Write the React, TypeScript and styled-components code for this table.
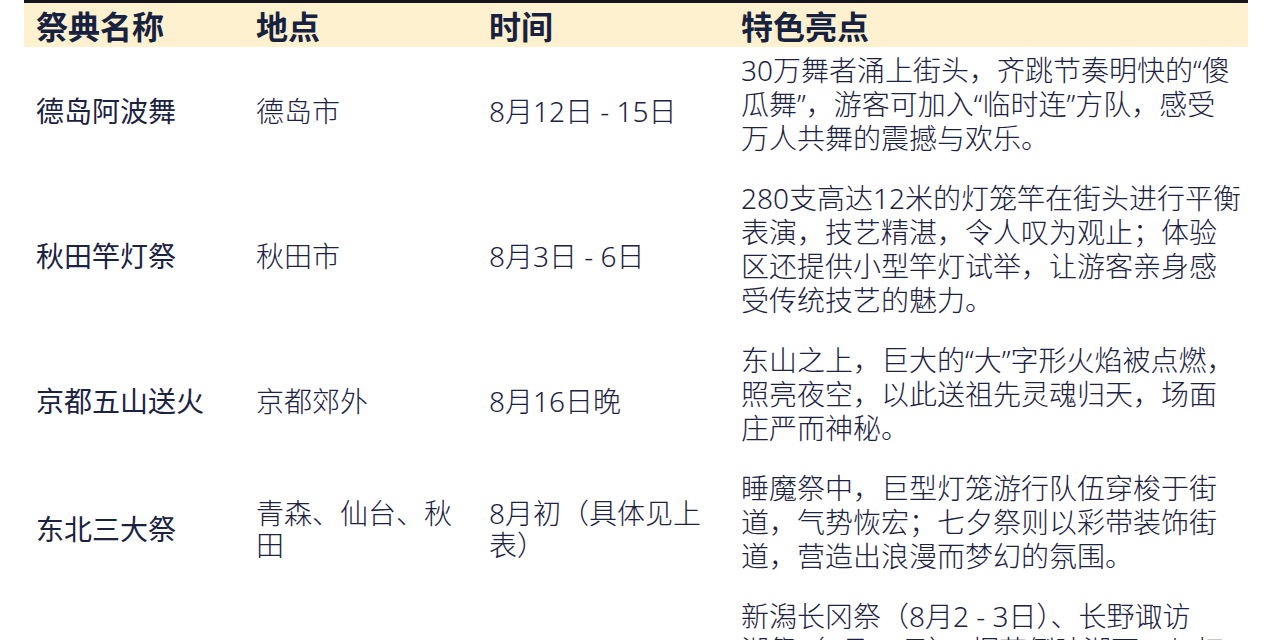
import React from "react";
import styled, {createGlobalStyle} from "styled-components";

const GlobalStyle = createGlobalStyle`
  html, body {
    margin: 0;
    padding: 0;
    background: #ffffff;
  }
  body {
    font-family: "Noto Sans", "Noto Sans CJK SC", sans-serif;
    color: #1d2444;
  }
`;

const Page = styled.div`
  width: 1280px;
  height: 640px;
  overflow: hidden;
  padding: 0 32px 0 24px;
  box-sizing: border-box;
`;

const Table = styled.table`
  width: 1224px;
  border-collapse: collapse;
  table-layout: fixed;
  border-top: 3px solid #14161c;
`;

const HeadRow = styled.tr`
  background: #fdf1cf;
`;

const HeadCell = styled.th<{$width: number}>`
  box-sizing: border-box;
  width: ${p => p.$width}px;
  height: 44px;
  padding: 4px 12px 0;
  text-align: left;
  vertical-align: middle;
  font-size: 32px;
  font-weight: 700;
  line-height: 40px;
  color: #16223f;
`;

const Cell = styled.td<{$name?: boolean}>`
  box-sizing: border-box;
  padding: 0 12px;
  vertical-align: middle;
  font-size: 28px;
  line-height: 32px;
  font-weight: ${p => (p.$name ? 400 : 300)};
  color: #1b2242;
`;

const DescCell = styled.td`
  box-sizing: border-box;
  padding: 6px 4px 20px 12px;
  vertical-align: top;
  font-size: 28px;
  line-height: 34px;
  font-weight: 300;
  color: #1b2242;
`;

const Line = styled.span`
  display: block;
  white-space: nowrap;
`;

interface Festival {
  name: string;
  place: string;
  time: string;
  lines: string[];
}

const festivals: Festival[] = [
  {
    name: "德岛阿波舞",
    place: "德岛市",
    time: "8月12日 - 15日",
    lines: [
      "30万舞者涌上街头，齐跳节奏明快的“傻",
      "瓜舞”，游客可加入“临时连”方队，感受",
      "万人共舞的震撼与欢乐。",
    ],
  },
  {
    name: "秋田竿灯祭",
    place: "秋田市",
    time: "8月3日 - 6日",
    lines: [
      "280支高达12米的灯笼竿在街头进行平衡",
      "表演，技艺精湛，令人叹为观止；体验",
      "区还提供小型竿灯试举，让游客亲身感",
      "受传统技艺的魅力。",
    ],
  },
  {
    name: "京都五山送火",
    place: "京都郊外",
    time: "8月16日晚",
    lines: [
      "东山之上，巨大的“大”字形火焰被点燃，",
      "照亮夜空，以此送祖先灵魂归天，场面",
      "庄严而神秘。",
    ],
  },
  {
    name: "东北三大祭",
    place: "青森、仙台、秋田",
    time: "8月初（具体见上表）",
    lines: [
      "睡魔祭中，巨型灯笼游行队伍穿梭于街",
      "道，气势恢宏；七夕祭则以彩带装饰街",
      "道，营造出浪漫而梦幻的氛围。",
    ],
  },
  {
    name: "其他地方祭典",
    place: "新潟、长野",
    time: "8月上中旬",
    lines: [
      "新潟长冈祭（8月2 - 3日）、长野诹访",
      "湖祭（8月15日）：烟花倒映湖面，与灯",
      "笼交相辉映，美不胜收。",
    ],
  },
];

const App = () => (
  <Page>
    <GlobalStyle/>
    <Table>
      <thead>
        <HeadRow>
          <HeadCell $width={220}>祭典名称</HeadCell>
          <HeadCell $width={233}>地点</HeadCell>
          <HeadCell $width={252}>时间</HeadCell>
          <HeadCell $width={519}>特色亮点</HeadCell>
        </HeadRow>
      </thead>
      <tbody>
        {festivals.map(f => (
          <tr key={f.name}>
            <Cell $name>{f.name}</Cell>
            <Cell>{f.place}</Cell>
            <Cell>{f.time}</Cell>
            <DescCell>
              {f.lines.map(l => (<Line key={l}>{l}</Line>))}
            </DescCell>
          </tr>
        ))}
      </tbody>
    </Table>
  </Page>
);

export default App;
